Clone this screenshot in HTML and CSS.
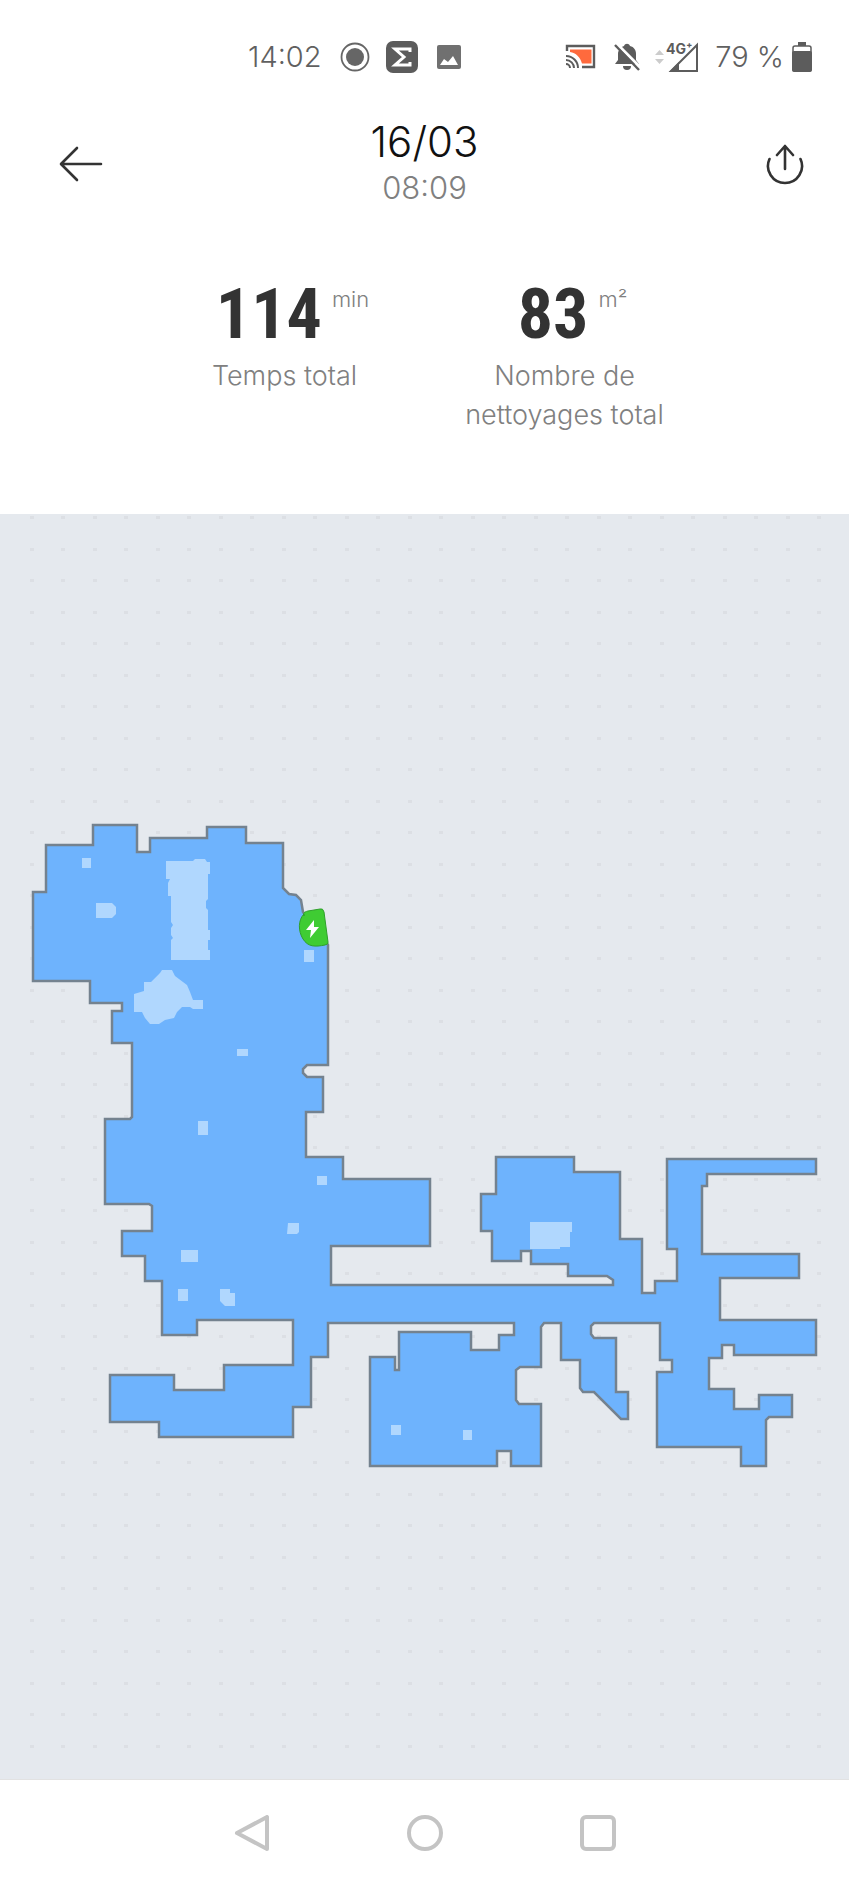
FILE: index.html
```html
<!DOCTYPE html>
<html lang="fr">
<head>
    <meta charset="UTF-8">
    <meta name="viewport" content="width=device-width, initial-scale=1.0">
    <title>Nettoyage du 16/03</title>
    <link rel="stylesheet" href="styles.css">
</head>
<body>
    <!-- Status bar -->
    <div class="status-bar">
        <div class="status-left">
            <span class="status-text">14:02</span>
            <svg class="icon-record" width="30" height="30" viewBox="0 0 30 30">
                <circle cx="15" cy="15" r="13.5" fill="none" stroke="#666" stroke-width="1.8"/>
                <circle cx="15" cy="15" r="9" fill="#666"/>
            </svg>
            <svg class="icon-sigma" width="34" height="34" viewBox="0 0 34 34">
                <rect x="1" y="1" width="32" height="32" rx="7" fill="#5c5c5c"/>
                <path d="M25 12V9H10l9 8-9 8h15v-3" fill="none" stroke="#fff" stroke-width="3"/>
            </svg>
            <svg class="icon-image" width="26" height="26" viewBox="0 0 26 26">
                <rect x="1" y="1" width="24" height="24" rx="2" fill="#707070"/>
                <path d="M4 21l4-6 4 3 5-6 5 9z" fill="#fff"/>
            </svg>
        </div>
        <div class="status-right">
            <svg width="32" height="26" viewBox="0 0 32 26">
                <path d="M2 7V2h27v21H17" fill="none" stroke="#5c5c5c" stroke-width="2.4"/>
                <path d="M5 5.5h21.5v14H17C15 13 11 9 5 8z" fill="#ff6a3d"/>
                <path d="M1 12a12 12 0 0 1 12 12M1 16a8 8 0 0 1 8 8M1 20a4 4 0 0 1 4 4" fill="none" stroke="#5c5c5c" stroke-width="2"/>
            </svg>
            <svg class="icon-bell" width="28" height="28" viewBox="0 0 28 28">
                <path d="M2 21l3-4v-6c0-4 3-7 6-8 1-3 5-3 6 0 4 1 6 4 6 8v6l3 4z" fill="#5c5c5c"/>
                <path d="M10 23h8a4 4 0 0 1-8 0z" fill="#5c5c5c"/>
                <path d="M4 1l24 24" stroke="#fff" stroke-width="3"/>
                <path d="M2 2l24 25" stroke="#5c5c5c" stroke-width="2.4"/>
            </svg>
            <svg class="icon-signal" width="44" height="32" viewBox="0 0 44 32">
                <path d="M0 14l4.5-5 4.5 5zM0 18h9l-4.5 5z" fill="#ccc"/>
                <path d="M16 30h26V4z" fill="none" stroke="#5c5c5c" stroke-width="2"/>
                <path d="M14 31h10V21z" fill="#5c5c5c"/>
                <text x="11" y="13" class="signal-type">4G⁺</text>
            </svg>
            <span class="status-text">79 %</span>
            <svg class="icon-battery" width="20" height="30" viewBox="0 0 20 30">
                <path d="M6 0h8v4H6z" fill="#5c5c5c"/>
                <rect x="1" y="4" width="18" height="25" rx="2" fill="#fff" stroke="#5c5c5c" stroke-width="1.5"/>
                <rect x="0" y="9" width="20" height="21" rx="2" fill="#5c5c5c"/>
            </svg>
        </div>
    </div>

    <!-- Header -->
    <header class="header">
        <button class="icon-btn" type="button" aria-label="Retour">
            <svg width="44" height="36" viewBox="0 0 44 36">
                <path d="M42 18H3M18 2L2 18l16 16" fill="none" stroke="#333" stroke-width="2.6" stroke-linecap="round" stroke-linejoin="round"/>
            </svg>
        </button>
        <div class="title">
            <h1>16/03</h1>
            <p>08:09</p>
        </div>
        <button class="icon-btn btn-share" type="button" aria-label="Partager">
            <svg width="38" height="42" viewBox="0 0 38 42">
                <path d="M19 26V3M11 12l8-9 8 9M3.5 16a17 17 0 1 0 31 0" fill="none" stroke="#333" stroke-width="2.6" stroke-linecap="round" stroke-linejoin="round"/>
            </svg>
        </button>
    </header>

    <!-- Cleaning totals -->
    <section class="stats">
        <div class="stat">
            <div class="value"><strong>114</strong><span>min</span></div>
            <p>Temps total</p>
        </div>
        <div class="stat">
            <div class="value"><strong>83</strong><span>m²</span></div>
            <p>Nombre de nettoyages total</p>
        </div>
    </section>

    <!-- Cleaned area -->
    <main class="map">
        <svg viewBox="0 514 849 1265" role="img" aria-label="Carte du nettoyage">
            <defs>
                <pattern id="dots" x="30" y="516" width="63" height="63" patternUnits="userSpaceOnUse">
                    <path d="M0 0h4v3H0zM31 0h4v3h-4zM0 32h4v3H0zM31 32h4v3h-4z" fill="#dcdfe4"/>
                </pattern>
            </defs>
            <rect x="20" y="514" width="802" height="1240" fill="url(#dots)"/>
            <path class="rooms" d="M33 892H46V845H93V825H137V852H150V838H207V827H246V843H283V888L289 894L296 895L301 900L303 912L328 945V1065H307L303 1069V1073L307 1077H323V1112H306V1157H343V1179H430V1246H331V1285H613V1280L607 1276H568V1264H531V1251H521V1261H492V1231H481V1194H496V1157H574V1172H620V1239H642V1293H655V1281H677V1249H667V1159H816V1174H707V1186H702V1254H799V1278H720V1320H816V1355H734V1345H722V1358H709V1389H734V1409H759V1395H792V1417H769L766 1420V1466H741V1447H657V1372H672V1360H660V1323H594L591 1326V1334L594 1338H616V1392H628V1419H621L594 1392H583L580 1388V1360H561V1323H544L541 1327V1367H520L516 1370V1400L519 1404H541V1466H511V1451H497V1466H370V1357H395V1370H399V1332H471V1350H499V1335H514V1323H328V1357H311V1407H293V1437H159V1422H110V1375H174V1390H224V1365H293V1320H197V1335H162V1281H145V1256H122V1231H152V1206L149 1204H105V1119H130L132 1117V1043H112V1011H122V1003H90V981H33Z"/>
            <g class="obstacles">
                <path d="M166 861H193L195 859H205L207 862H210V874H208V899L206 901V908L208 910V930H210V940H208V950H210V960H171V940L173 938L171 935V928L173 925L171 922V896H168V883L170 879H166Z"/>
                <path d="M160 973L162 970H172L175 976L187 985L190 992L193 1000H203V1009H193L190 1007H182L177 1012L174 1018L165 1020L159 1024H150L145 1018L142 1012H134V994L144 991V982H151Z"/>
                <path d="M82 858H91V868H82zM96 903H112L116 907V914L112 918H96zM304 950H314V962H304zM237 1049H248V1056H237zM198 1121H208V1135H198zM317 1176H327V1185H317zM288 1223H299V1232L297 1234H287zM181 1250H198V1262H181zM178 1289H188V1301H178zM220 1289H230V1293H235V1306H225L220 1301zM530 1222H572V1232H570V1247H560V1249H530zM391 1425H401V1435H391zM463 1430H472V1440H463z"/>
            </g>
            <!-- Charging station -->
            <g class="station">
                <path d="M304 916C303 913 304 912 308 911L320 909Q323 908 324 912L328 942Q329 944 325 945C315 947 308 947 303 939C298 931 298 920 304 914Z"/>
                <path class="bolt" d="M314 920L306 930H311L310 938L319 927H314Z"/>
            </g>
        </svg>
    </main>

    <!-- System navigation -->
    <nav class="nav-bar">
        <button type="button" aria-label="Précédent">
            <svg width="36" height="36" viewBox="0 0 36 36">
                <path d="M33 2v32L3 18z"/>
            </svg>
        </button>
        <button type="button" aria-label="Accueil">
            <svg width="36" height="36" viewBox="0 0 36 36">
                <circle cx="18" cy="18" r="16"/>
            </svg>
        </button>
        <button type="button" aria-label="Applications récentes">
            <svg width="36" height="36" viewBox="0 0 36 36">
                <rect x="2" y="2" width="32" height="32" rx="4"/>
            </svg>
        </button>
    </nav>
</body>
</html>
```

FILE: styles.css
```css
* {
    box-sizing: border-box;
}
body {
    margin: 0;
    background-color: #fff;
    font-family: Inter, "Liberation Sans", sans-serif;
    font-weight: 300;
    color: #808080;
}
h1, p {
    margin: 0;
    font-weight: 300;
}
svg {
    display: block;
}
button {
    padding: 0;
    border: none;
    background: none;
    cursor: pointer;
}
.status-bar {
    display: flex;
    justify-content: space-between;
    align-items: center;
    height: 114px;
    padding: 0 37px 0 248px;
}
.status-left, .status-right {
    display: flex;
    align-items: center;
}
.status-text {
    font-size: 29px;
    line-height: 36px;
    color: #606060;
    white-space: nowrap;
}
.icon-record {
    margin-left: 18px;
}
.icon-sigma {
    margin-left: 15px;
}
.icon-image {
    margin-left: 17px;
}
.icon-bell {
    margin-left: 16px;
}
.icon-signal {
    margin: 0 16px 0 14px;
}
.icon-battery {
    margin-left: 8px;
}
.signal-type {
    font-size: 14px;
    font-weight: 700;
    fill: #5c5c5c;
}
.header {
    display: grid;
    grid-template-columns: 1fr auto 1fr;
    align-items: center;
    height: 100px;
    padding: 0 45px 0 45px;
}
.icon-btn {
    justify-self: start;
    margin-left: 14px;
}
.btn-share {
    justify-self: end;
    margin: 0;
}
.title {
    text-align: center;
}
.title h1 {
    font-size: 42px;
    line-height: 48px;
    color: #111;
}
.title p {
    font-size: 31px;
    line-height: 44px;
}
.stats {
    display: flex;
    justify-content: center;
    height: 300px;
    padding-top: 64px;
}
.stat {
    width: 280px;
    padding: 0 36px;
    text-align: center;
}
.value {
    display: flex;
    justify-content: center;
    gap: 10px;
    height: 78px;
    padding-left: 16px;
}
.value strong {
    font-family: "Roboto Condensed", "Liberation Sans Narrow", Roboto, sans-serif;
    font-size: 70px;
    line-height: 72px;
    font-weight: 700;
    color: #333;
}
.value span {
    font-size: 22px;
    line-height: 42px;
}
.stat p {
    font-size: 27px;
    line-height: 39px;
}
.map {
    background-color: #e5e9ee;
    border-bottom: 1px solid #e2e2e2;
}
.map svg {
    width: 100%;
    height: auto;
}
.rooms {
    fill: #6eb3fd;
    stroke: #74828f;
    stroke-width: 2.5;
}
.obstacles {
    fill: #b0d7fe;
}
.station {
    fill: #3fcc33;
    stroke: #2fa02b;
    stroke-width: 1;
}
.bolt {
    fill: #fff;
    stroke: none;
}
.nav-bar {
    display: flex;
    justify-content: center;
    gap: 137px;
    padding: 35px 0;
}
.nav-bar svg {
    fill: none;
    stroke: #c4c4c4;
    stroke-width: 4;
    stroke-linejoin: round;
}
```
